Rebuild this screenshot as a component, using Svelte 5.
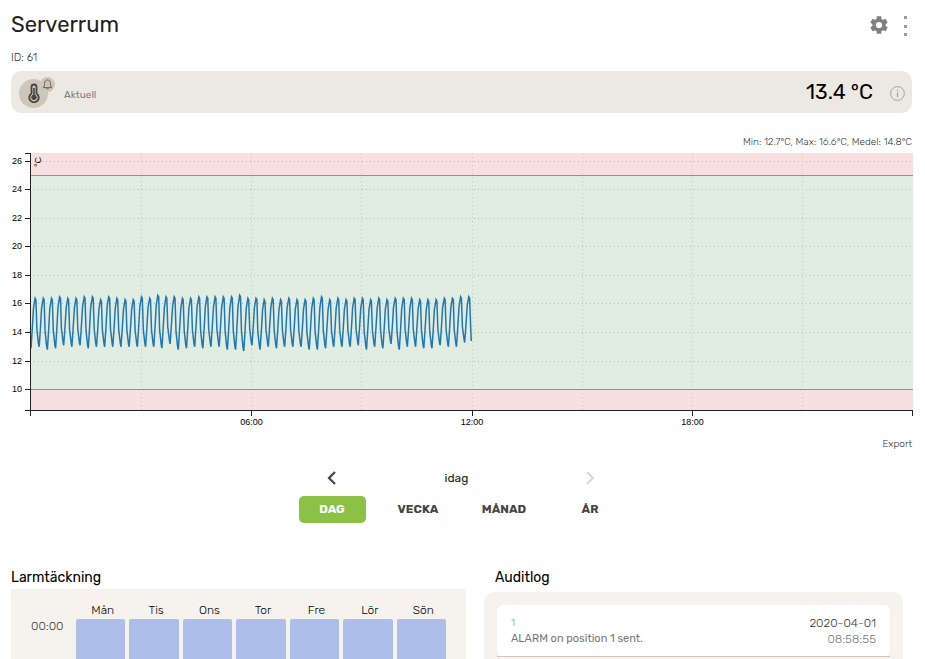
<script lang="ts">
	const highs = [
		16.4, 16.4, 16.4, 16.5, 16.4, 16.4, 16.5, 16.5, 16.3, 16.5, 16.4, 16.3, 16.3, 16.5, 16.4, 16.6, 16.5, 16.5,
		16.4, 16.4, 16.5, 16.5, 16.5, 16.5, 16.5, 16.6, 16.4, 16.4, 16.3, 16.4, 16.3, 16.4, 16.3, 16.3, 16.4, 16.5,
		16.3, 16.4, 16.3, 16.4, 16.4, 16.3, 16.4, 16.3, 16.4, 16.4, 16.4, 16.3, 16.3, 16.3, 16.4, 16.4, 16.5, 16.5
	];
	const lows = [
		12.9, 13.0, 12.8, 12.9, 13.1, 13.0, 13.1, 12.9, 13.0, 13.0, 13.0, 13.0, 13.0, 13.0, 13.0, 13.0, 12.9, 13.2,
		12.8, 12.9, 13.0, 12.9, 13.0, 13.0, 12.8, 12.8, 12.7, 13.1, 12.8, 13.0, 12.9, 13.0, 13.0, 13.0, 12.8, 12.8,
		12.9, 13.0, 13.0, 13.0, 13.1, 12.8, 13.0, 12.9, 13.2, 12.8, 13.0, 13.0, 12.9, 12.9, 13.1, 13.0, 13.0, 13.3
	];
	const lastValue = 13.4;

	const days = ['Mån', 'Tis', 'Ons', 'Tor', 'Fre', 'Lör', 'Sön'];
	const hours = ['00:00'];
	const periods = ['DAG', 'VECKA', 'MÅNAD', 'ÅR'];
	let period = $state('DAG');

	// chart
	const top = 4;
	const bottom = 261;
	const left = 19;
	const max = 26.5;
	const min = 8.5;
	let width = $state(900);

	const y = (v: number) => top + 1 + ((max - v) / (max - min)) * (bottom - top);
	const x = (h: number) => left + 1 + (h / 24) * (width - left);
	const yTicks = [26, 24, 22, 20, 18, 16, 14, 12, 10];
	const xTicks = [6, 12, 18];
	const xGrid = [3, 6, 9, 12, 15, 18, 21];

	let line = $derived.by(() => {
		const cycle = 11.98 / (highs.length - 0.2);
		const pts: number[][] = [];
		highs.forEach((hi, i) => {
			const lo = lows[i];
			const next = lows[i + 1] ?? lastValue;
			const t = i * cycle;
			pts.push([t, lo]);
			pts.push([t + cycle * 0.16, lo + (hi - lo) * 0.4]);
			pts.push([t + cycle * 0.3, lo + (hi - lo) * 0.8]);
			pts.push([t + cycle * 0.5, hi]);
			pts.push([t + cycle * 0.6, hi - 0.1]);
			pts.push([t + cycle * 0.72, next + (hi - next) * 0.35]);
			if (i < highs.length - 1) pts.push([t + cycle * 0.92, next + 0.2]);
		});
		pts.push([11.98, lastValue]);
		return pts.map(([h, v]) => `${x(h).toFixed(1)},${y(v).toFixed(1)}`).join(' ');
	});
</script>

<div class="page">
	<header>
		<h1>Serverrum</h1>
		<button class="icon" type="button" aria-label="Inställningar">
			<svg width="22" height="22" viewBox="0 0 24 24" fill="#7f7f7f">
				<path
					d="M19.14 12.94c.04-.3.06-.61.06-.94 0-.32-.02-.64-.07-.94l2.03-1.58c.18-.14.23-.41.12-.61l-1.92-3.32c-.12-.22-.37-.29-.59-.22l-2.39.96c-.5-.38-1.03-.7-1.62-.94l-.36-2.54c-.04-.24-.24-.41-.48-.41h-3.84c-.24 0-.43.17-.47.41l-.36 2.54c-.59.24-1.13.57-1.62.94l-2.39-.96c-.22-.08-.47 0-.59.22L2.74 8.87c-.12.21-.08.47.12.61l2.03 1.58c-.05.3-.09.63-.09.94s.02.64.07.94l-2.03 1.58c-.18.14-.23.41-.12.61l1.92 3.32c.12.22.37.29.59.22l2.39-.96c.5.38 1.03.7 1.62.94l.36 2.54c.05.24.24.41.48.41h3.84c.24 0 .44-.17.47-.41l.36-2.54c.59-.24 1.13-.56 1.62-.94l2.39.96c.22.08.47 0 .59-.22l1.92-3.32c.12-.22.07-.47-.12-.61l-2.01-1.58zM12 15.4a3.4 3.4 0 1 1 0-6.8 3.4 3.4 0 0 1 0 6.8z"
				/>
			</svg>
		</button>
		<button class="icon more" type="button" aria-label="Mer">
			<svg width="3" height="22" viewBox="0 0 3 22" fill="#a09a94">
				<rect width="3" height="3" y="1" />
				<rect width="3" height="3" y="10" />
				<rect width="3" height="3" y="18" />
			</svg>
		</button>
	</header>
	<div class="id">ID: 61</div>

	<section class="current">
		<div class="sensor">
			<svg width="12" height="20" viewBox="0 0 12 20" fill="none" stroke="#454545">
				<path d="M3.5 10.6V4a2.5 2.5 0 0 1 5 0v6.6a4.7 4.7 0 1 1-5 0z" stroke-width="1.8" />
				<path d="M6 5v9" stroke-width="1.6" />
				<circle cx="6" cy="14.3" r="2.3" fill="#454545" />
			</svg>
			<span class="bell">
				<svg width="11" height="11" viewBox="0 0 11 11" fill="none" stroke="#5f5a55" stroke-width="0.9">
					<path d="M1 8.6c1.3-.8 1.6-1.8 1.6-4.2C2.6 2.3 3.7 1 5.5 1s2.9 1.3 2.9 3.4c0 2.4.3 3.4 1.6 4.2z" />
					<path d="M4.5 9a1 1 0 0 0 2 0" />
				</svg>
			</span>
		</div>
		<span class="label">Aktuell</span>
		<span class="value">13.4 °C</span>
		<button class="icon" type="button" aria-label="Information">
			<svg width="15" height="15" viewBox="0 0 15 15" fill="none" stroke="#a39a8e">
				<circle cx="7.5" cy="7.5" r="6.9" stroke-width="0.9" />
				<path d="M7.5 6.3v5M7.5 3.8v1.2" stroke-width="1.1" />
			</svg>
		</button>
	</section>

	<div class="stats">Min: 12.7°C, Max: 16.6°C, Medel: 14.8°C</div>

	<div class="chart" bind:clientWidth={width}>
		<svg {width} height="280">
			<rect class="bad" x={left} y={top} width={width - left + 1} height={bottom - top} />
			<rect class="good" x={left} y={y(25)} width={width - left + 1} height={y(10) - y(25)} />
			{#each yTicks as t}
				<line class="grid" x1={left + 4} x2={width} y1={Math.floor(y(t))} y2={Math.floor(y(t))} />
			{/each}
			{#each xGrid as t}
				<line class="grid vertical" x1={x(t)} x2={x(t)} y1={top} y2={bottom} />
			{/each}
			<line class="limit" x1={left} x2={width + 1} y1={y(25)} y2={y(25)} />
			<line class="limit" x1={left} x2={width + 1} y1={y(10)} y2={y(10)} />
			<polyline class="series" points={line} />
			<path class="axis" d="M{left - 5} {top}H{left}V{bottom}H{left - 5}" />
			<path class="axis" d="M{left} {bottom + 6}V{bottom}H{width}V{bottom + 6}" />
			{#each yTicks as t}
				<path class="axis" d="M{left - 5} {Math.floor(y(t))}h5" />
				<text x={left - 8} y={Math.floor(y(t)) + 3} text-anchor="end">{t}</text>
			{/each}
			{#each xTicks as t}
				<path class="axis" d="M{x(t)} {bottom}v6" />
				<text x={x(t)} y={bottom + 15} text-anchor="middle">{String(t).padStart(2, '0')}:00</text>
			{/each}
			<text transform="translate({left + 11} {top + 4}) rotate(-90)" text-anchor="end">°C</text>
		</svg>
	</div>

	<a class="export" href="#export">Export</a>

	<nav>
		<div class="date">
			<button class="icon" type="button" aria-label="Föregående">
				<svg width="10" height="14" viewBox="0 0 10 14" fill="none" stroke="#444" stroke-width="2.2">
					<path d="M8 1 2 7l6 6" />
				</svg>
			</button>
			<span>idag</span>
			<button class="icon" type="button" aria-label="Nästa" disabled>
				<svg width="10" height="14" viewBox="0 0 10 14" fill="none" stroke="#d8d8d8" stroke-width="2">
					<path d="m2 1 6 6-6 6" />
				</svg>
			</button>
		</div>
		<div class="periods">
			{#each periods as p}
				<button type="button" class:active={period === p} onclick={() => (period = p)}>{p}</button>
			{/each}
		</div>
	</nav>

	<div class="columns">
		<section>
			<h2>Larmtäckning</h2>
			<div class="coverage">
				<span></span>
				{#each days as day}
					<span class="day">{day}</span>
				{/each}
				{#each hours as hour}
					<span class="hour">{hour}</span>
					{#each days as _}
						<span class="cell"></span>
					{/each}
				{/each}
			</div>
		</section>
		<section>
			<h2 class="indent">Auditlog</h2>
			<div class="log">
				<ul>
					<li>
						<div>
							<span class="number">1</span>
							<span class="message">ALARM on position 1 sent.</span>
						</div>
						<div class="time">
							<span>2020-04-01</span>
							<span class="clock">08:58:55</span>
						</div>
					</li>
				</ul>
			</div>
		</section>
	</div>
</div>

<style>
	:global(body) {
		margin: 0;
		background: #fff;
	}
	.page {
		box-sizing: border-box;
		display: flex;
		flex-direction: column;
		height: 100vh;
		overflow: hidden;
		padding: 9px 13px 0 11px;
		font-family: Rubik, Roboto, sans-serif;
		font-size: 12px;
		font-weight: 300;
		color: #222;
	}
	.page > * {
		flex-shrink: 0;
	}
	button {
		font: inherit;
		border: none;
		background: none;
		padding: 0;
		cursor: pointer;
	}
	.icon {
		display: grid;
		place-items: center;
	}
	header {
		display: flex;
		align-items: center;
	}
	h1 {
		flex: 1;
		margin: 0;
		font-size: 22px;
		font-weight: 400;
		line-height: 32px;
	}
	.more {
		margin: 2px 5px 0 14px;
	}
	.id {
		margin: 9px 0 5px;
		font-size: 11px;
		line-height: 16px;
		color: #333;
	}
	.current {
		display: flex;
		align-items: center;
		height: 42px;
		padding: 0 7px 0 8px;
		border-radius: 10px;
		background: #ece9e2;
	}
	.sensor {
		position: relative;
		display: grid;
		place-items: center;
		width: 29px;
		height: 29px;
		margin-top: 2px;
		border-radius: 50%;
		background: #cfc6b9;
	}
	.bell {
		position: absolute;
		top: -2px;
		right: -7px;
		display: grid;
		place-items: center;
		width: 15px;
		height: 15px;
		border-radius: 50%;
		background: #cfc6b9;
	}
	.label {
		flex: 1;
		padding: 5px 0 0 16px;
		font-size: 10px;
		font-weight: 400;
		color: #808080;
	}
	.value {
		margin: 0 17px 2px 0;
		font-size: 21px;
		font-weight: 400;
		color: #000;
	}
	.current .icon {
		margin-top: 3px;
	}
	.stats {
		margin-top: 22px;
		font-size: 10px;
		line-height: 14px;
		text-align: right;
		color: #333;
	}
	.chart svg {
		display: block;
		overflow: visible;
	}
	.chart text {
		font: 9px 'Liberation Sans', Arial, sans-serif;
		fill: #000;
	}
	.bad {
		fill: #f8e0e0;
	}
	.good {
		fill: #e2ede1;
	}
	.bad,
	.good,
	.grid,
	.limit,
	.axis {
		shape-rendering: crispEdges;
	}
	.grid {
		stroke: #b4bcb3;
		stroke-dasharray: 1 3;
	}
	.vertical {
		stroke: #c0c6bf;
	}
	.limit {
		stroke: #919191;
	}
	.axis {
		fill: none;
		stroke: #222;
	}
	.series {
		fill: none;
		stroke: #1f77b4;
		stroke-width: 1.5;
	}
	.export {
		align-self: flex-end;
		margin-top: 7px;
		font-size: 10px;
		line-height: 16px;
		color: #333;
		text-decoration: none;
	}
	nav {
		align-self: center;
		width: 344px;
		margin: 16px 2px 0 0;
	}
	.date {
		display: grid;
		grid-template-columns: 1fr 2fr 1fr;
		height: 20px;
		line-height: 20px;
		text-align: center;
		font-weight: 400;
		color: #222;
	}
	.date span {
		padding-right: 8px;
	}
	.periods {
		display: grid;
		grid-template-columns: repeat(4, 1fr);
		margin-top: 8px;
	}
	.periods button {
		height: 27px;
		margin: 0 9px 0 10px;
		padding-bottom: 1px;
		border-radius: 5px;
		font-weight: 700;
		color: #444;
	}
	.periods .active {
		background: #8bc145;
		color: #fff;
	}
	.columns {
		display: grid;
		grid-template-columns: 455fr 419fr;
		gap: 18px;
		flex: 1 1 0;
		min-height: 0;
		margin-top: 45px;
		padding-right: 9px;
	}
	h2 {
		margin: 0;
		font-size: 14px;
		font-weight: 400;
		line-height: 20px;
		color: #000;
	}
	.indent {
		padding-left: 11px;
	}
	.coverage {
		display: grid;
		grid-template-columns: 41px repeat(7, 1fr);
		gap: 4px;
		margin-top: 1px;
		padding: 13px 20px 20px;
		background: #f6f3ee;
		text-align: center;
	}
	.day {
		padding-left: 4px;
		line-height: 17px;
		margin-bottom: -4px;
		color: #000;
	}
	.hour {
		line-height: 14px;
		color: #333;
		text-align: left;
	}
	.cell {
		height: 60px;
		border-radius: 2px;
		background: #aebeea;
	}
	.log {
		min-height: 80px;
		margin-top: 4px;
		padding: 13px;
		border-radius: 10px;
		background: #f6f3ee;
	}
	ul {
		margin: 0;
		padding: 0;
		list-style: none;
		border-radius: 6px;
		background: #fff;
	}
	li {
		display: flex;
		justify-content: space-between;
		padding: 10px 14px 9px;
		border-bottom: 1px solid #cfc6b9;
		line-height: 16px;
		color: #333;
	}
	li div {
		display: flex;
		flex-direction: column;
	}
	.number {
		font-size: 10px;
		color: #5f93b8;
	}
	.message {
		font-size: 11px;
		font-weight: 400;
		color: #777;
	}
	.time {
		text-align: right;
	}
	.clock {
		color: #777;
	}
</style>
